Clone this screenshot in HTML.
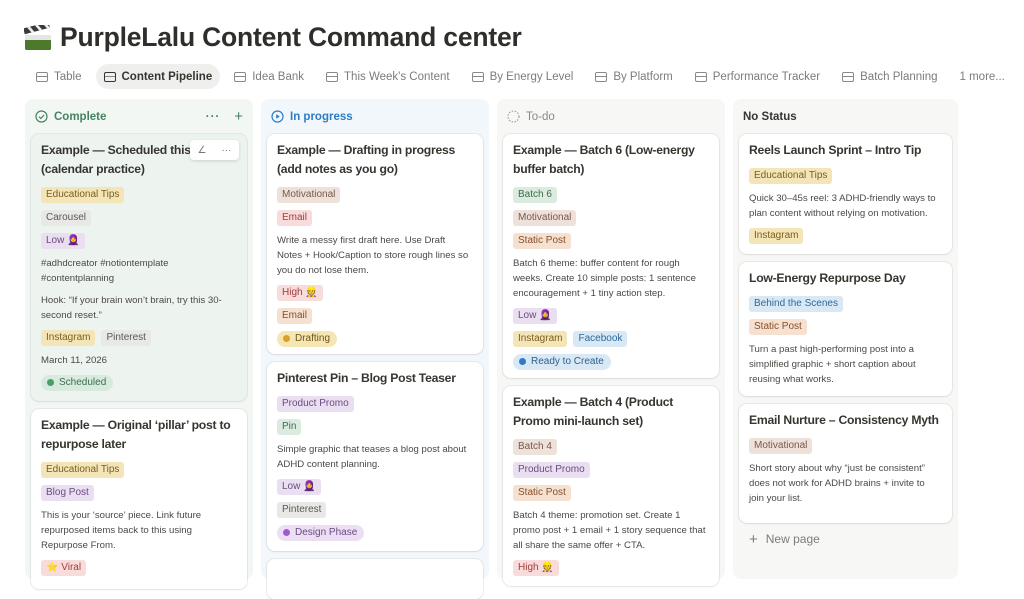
<!DOCTYPE html>
<html><head><meta charset="utf-8"><style>
*{box-sizing:border-box;margin:0;padding:0}
body{width:1024px;height:566px;overflow:hidden;background:#fff;font-family:"Liberation Sans","DejaVu Sans",sans-serif;color:#37352f;position:relative}
h1{position:absolute;left:24px;top:22px;font-size:26.5px;font-weight:700;color:#2f2e2b;letter-spacing:-0.2px;display:flex;align-items:center;gap:8px}
.tabs{position:absolute;left:28px;top:64px;display:flex;gap:6px;font-size:11.5px;color:#7d7c78;white-space:nowrap}
.tab{height:25px;display:flex;align-items:center;padding:0 8px;gap:6px;border-radius:13px}
.tab.on{background:#efefed;color:#37352f;font-weight:600}
.ic{width:12px;height:10px;border:1.3px solid #8a8985;border-radius:2px;position:relative}
.ic:after{content:"";position:absolute;left:0;right:0;top:3px;border-top:1.2px solid #8a8985}
.col{position:absolute;top:99px;width:228px;height:480px;border-radius:8px;padding:0 6px}
.hd{height:35px;display:flex;align-items:center;font-size:11.5px;font-weight:600;padding-left:4px;gap:6px}
.card{background:#fff;border-radius:8px;box-shadow:0 0 0 1px rgba(15,15,15,.06),0 1px 2px rgba(15,15,15,.06);padding:7px 10px 9px;display:flex;flex-direction:column;align-items:flex-start;gap:7px;margin-bottom:8px;overflow:hidden}
.t{font-size:12.2px;font-weight:700;line-height:19px;color:#37352f;letter-spacing:-0.25px;margin-bottom:0.5px}
.g{height:16px;line-height:16px;font-size:10px;padding:0 5px;border-radius:3px;white-space:nowrap}
.row{display:flex;gap:6px}
.p{font-size:9.6px;line-height:15px;color:#4a4945}
.s{height:16px;line-height:16px;font-size:10px;padding:0 7px 0 6px;border-radius:8px;display:flex;align-items:center;gap:5px}
.s i{width:7px;height:7px;border-radius:50%;display:inline-block}
.y{background:#f3e5b8;color:#7a5f1e}.gr{background:#e8e8e6;color:#5a5955}.pu{background:#eadff0;color:#6b4a84}
.gn{background:#dcebe0;color:#3c6e4c}.br{background:#eee1da;color:#79584a}.or{background:#f6e0d0;color:#85502d}
.bl{background:#d8e8f5;color:#2e6a99}.rd{background:#f8dcdc;color:#a33d3d}
</style></head><body>
<h1><svg width="28" height="26" viewBox="0 0 28 26"><rect x="1" y="11" width="26" height="14" rx="1.5" fill="#4d7a2a"/><rect x="1" y="10" width="26" height="5" fill="#e5e5e5"/><g transform="rotate(-15 2 10)"><rect x="1" y="3" width="26" height="6" fill="#3a3a3a"/><path d="M5 3l3 6h3l-3-6zM13 3l3 6h3l-3-6zM21 3l3 6h3l-3-6z" fill="#eee"/></g></svg>PurpleLalu Content Command center</h1>
<div class="tabs">
<div class="tab"><span class="ic"></span>Table</div>
<div class="tab on"><span class="ic" style="border-color:#37352f"></span>Content Pipeline</div>
<div class="tab"><span class="ic"></span>Idea Bank</div>
<div class="tab"><span class="ic"></span>This Week's Content</div>
<div class="tab"><span class="ic"></span>By Energy Level</div>
<div class="tab"><span class="ic"></span>By Platform</div>
<div class="tab"><span class="ic"></span>Performance Tracker</div>
<div class="tab"><span class="ic"></span>Batch Planning</div>
<div class="tab">1 more...</div>
</div>

<div class="col" style="left:25px;background:#f3f7f4">
<div class="hd" style="color:#448361"><svg width="13" height="13" viewBox="0 0 13 13"><circle cx="6.5" cy="6.5" r="5.5" fill="none" stroke="#448361" stroke-width="1.2"/><path d="M4 6.7l1.8 1.8 3.3-3.5" fill="none" stroke="#448361" stroke-width="1.2"/></svg>Complete<span style="margin-left:auto;color:#448361;letter-spacing:1px">···</span><span style="margin:0 4px 0 8px;font-size:15px;font-weight:400">+</span></div>
<div class="card" style="background:#edf3ee;height:267px;position:relative">
<div class="t">Example — Scheduled this week (calendar practice)</div>
<div style="position:absolute;left:159px;top:6px;width:49px;height:20px;background:#fff;border-radius:4px;box-shadow:0 1px 3px rgba(0,0,0,.15);font-size:10px;color:#777;display:flex;align-items:center;justify-content:space-around">∠<span>···</span></div>
<span class="g y">Educational Tips</span><span class="g gr">Carousel</span><span class="g pu">Low 🧕</span>
<div class="p">#adhdcreator #notiontemplate #contentplanning</div>
<div class="p">Hook: “If your brain won’t brain, try this 30-second reset.”</div>
<div class="row"><span class="g y">Instagram</span><span class="g gr">Pinterest</span></div>
<div class="p">March 11, 2026</div>
<span class="s" style="background:#d8eadd;color:#3c6e4c"><i style="background:#4a9e6a"></i>Scheduled</span>
</div>
<div class="card" style="height:180px">
<div class="t">Example — Original ‘pillar’ post to repurpose later</div>
<span class="g y">Educational Tips</span><span class="g pu">Blog Post</span>
<div class="p">This is your ‘source’ piece. Link future repurposed items back to this using Repurpose From.</div>
<span class="g rd">⭐ Viral</span>
</div>
</div>

<div class="col" style="left:261px;background:#f2f7fb">
<div class="hd" style="color:#2f7cc4"><svg width="13" height="13" viewBox="0 0 13 13"><circle cx="6.5" cy="6.5" r="5.5" fill="none" stroke="#2f7cc4" stroke-width="1.2"/><path d="M5.2 4.2v4.6l3.6-2.3z" fill="#2f7cc4"/></svg>In progress</div>
<div class="card" style="height:220px">
<div class="t">Example — Drafting in progress (add notes as you go)</div>
<span class="g br">Motivational</span><span class="g rd">Email</span>
<div class="p">Write a messy first draft here. Use Draft Notes + Hook/Caption to store rough lines so you do not lose them.</div>
<span class="g rd">High 👷</span><span class="g or">Email</span>
<span class="s" style="background:#f5e6b3;color:#6d5318"><i style="background:#d9a02a"></i>Drafting</span>
</div>
<div class="card" style="height:189px">
<div class="t">Pinterest Pin – Blog Post Teaser</div>
<span class="g pu">Product Promo</span><span class="g gn">Pin</span>
<div class="p">Simple graphic that teases a blog post about ADHD content planning.</div>
<span class="g pu">Low 🧕</span><span class="g gr">Pinterest</span>
<span class="s" style="background:#ecdff3;color:#6b4a84"><i style="background:#a05ad0"></i>Design Phase</span>
</div>
<div class="card" style="height:40px"></div>
</div>

<div class="col" style="left:497px;background:#f7f7f5">
<div class="hd" style="color:#8a8985;font-weight:400"><svg width="13" height="13" viewBox="0 0 13 13"><circle cx="6.5" cy="6.5" r="5.5" fill="none" stroke="#9b9a97" stroke-width="1.1" stroke-dasharray="1.5 1.5"/></svg>To-do</div>
<div class="card" style="height:244px">
<div class="t">Example — Batch 6 (Low-energy buffer batch)</div>
<span class="g gn">Batch 6</span><span class="g br">Motivational</span><span class="g or">Static Post</span>
<div class="p">Batch 6 theme: buffer content for rough weeks. Create 10 simple posts: 1 sentence encouragement + 1 tiny action step.</div>
<span class="g pu">Low 🧕</span>
<div class="row"><span class="g y">Instagram</span><span class="g bl">Facebook</span></div>
<span class="s" style="background:#d8e8f5;color:#2e5f8a"><i style="background:#2f7cc4"></i>Ready to Create</span>
</div>
<div class="card" style="height:200px">
<div class="t">Example — Batch 4 (Product Promo mini-launch set)</div>
<span class="g br">Batch 4</span><span class="g pu">Product Promo</span><span class="g or">Static Post</span>
<div class="p">Batch 4 theme: promotion set. Create 1 promo post + 1 email + 1 story sequence that all share the same offer + CTA.</div>
<span class="g rd">High 👷</span>
</div>
</div>

<div class="col" style="left:733px;width:225px;background:#f7f7f5">
<div class="hd" style="color:#37352f;font-weight:600">No Status</div>
<div class="card" style="height:120px">
<div class="t">Reels Launch Sprint – Intro Tip</div>
<span class="g y">Educational Tips</span>
<div class="p">Quick 30–45s reel: 3 ADHD-friendly ways to plan content without relying on motivation.</div>
<span class="g y">Instagram</span>
</div>
<div class="card" style="height:134px">
<div class="t">Low-Energy Repurpose Day</div>
<span class="g bl">Behind the Scenes</span><span class="g or">Static Post</span>
<div class="p">Turn a past high-performing post into a simplified graphic + short caption about reusing what works.</div>
</div>
<div class="card" style="height:119px;margin-bottom:0">
<div class="t">Email Nurture – Consistency Myth</div>
<span class="g br">Motivational</span>
<div class="p">Short story about why “just be consistent” does not work for ADHD brains + invite to join your list.</div>
</div>
<div style="height:32px;display:flex;align-items:center;padding-left:10px;font-size:12px;color:#7d7c78;gap:8px"><span style="font-size:15px">+</span>New page</div>
</div>
</body></html>
